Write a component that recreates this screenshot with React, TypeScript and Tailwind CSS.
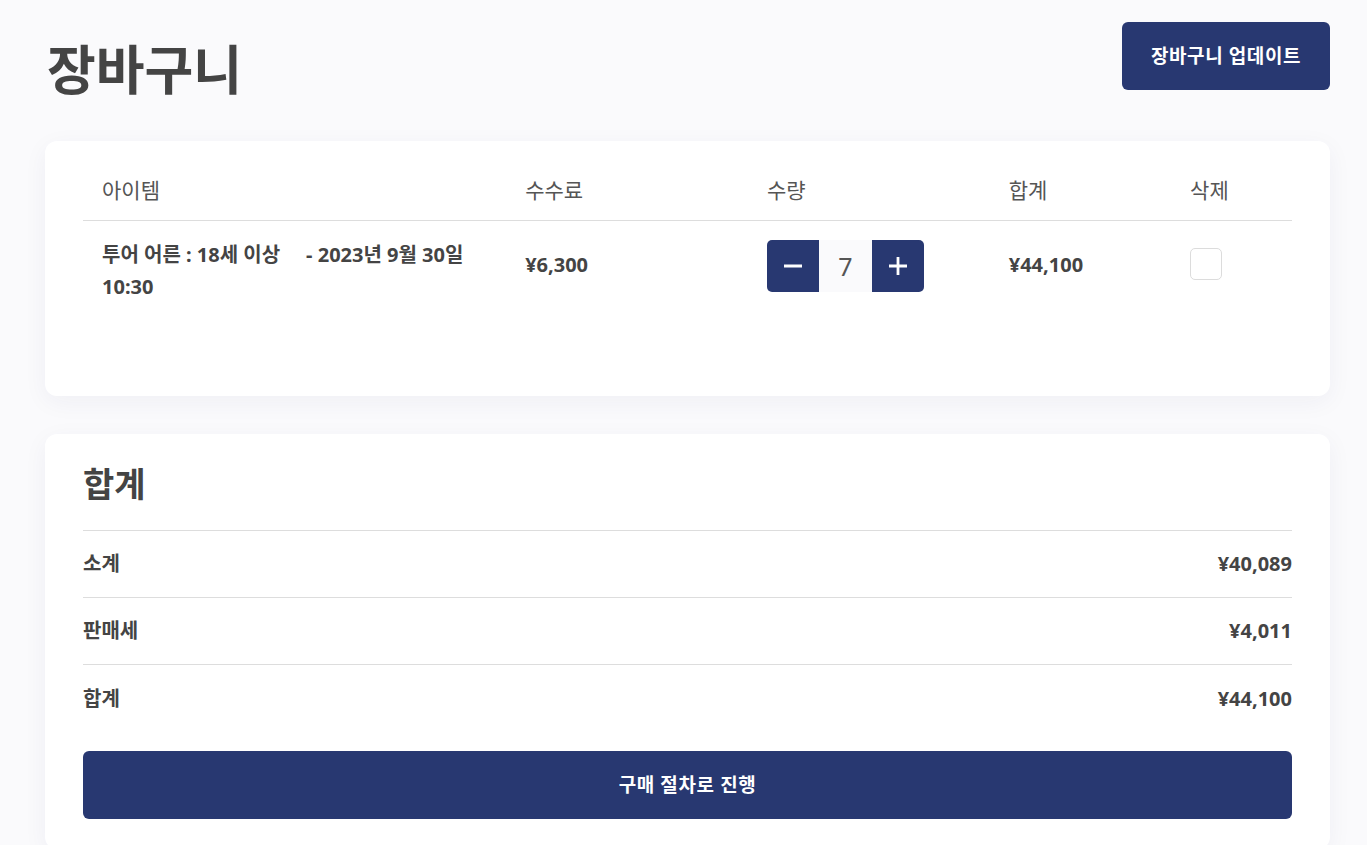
import React, { useState } from 'react';

const font = { fontFamily: '"Noto Sans", "Noto Sans CJK KR", sans-serif' };

export default function App() {
  const [qty, setQty] = useState(7);
  const [remove, setRemove] = useState(false);

  return (
    <div className="min-h-screen bg-[#fafafc] text-[#444]" style={font}>
      <div className="pl-[45px] pr-[37px] pt-[22px]">
        {/* Header */}
        <div className="flex items-start justify-between">
          <h1 className="mt-[12px] pl-[2px] text-[53px] font-bold leading-[72px] text-[#444]">장바구니</h1>
          <button className="h-[68px] w-[208px] rounded-md bg-[#283871] text-[19px] font-bold tracking-[0.6px] text-white">
            장바구니 업데이트
          </button>
        </div>

        {/* Cart table */}
        <div className="mt-[35px] rounded-xl bg-white px-[38px] pt-[34px] pb-[93px] shadow-[0_6px_24px_rgba(30,40,90,0.05)]">
          <table className="w-full table-fixed border-collapse">
            <colgroup>
              <col className="w-[35%]" />
              <col className="w-[20%]" />
              <col className="w-[20%]" />
              <col className="w-[15%]" />
              <col className="w-[10%]" />
            </colgroup>
            <thead>
              <tr className="border-b border-[#ddd] text-left text-[21px] leading-[30px] text-[#555]">
                <th className="px-[19px] pb-[15px] font-normal">아이템</th>
                <th className="px-[19px] pb-[15px] font-normal">수수료</th>
                <th className="px-[19px] pb-[15px] font-normal">수량</th>
                <th className="px-[19px] pb-[15px] font-normal">합계</th>
                <th className="px-[19px] pb-[15px] font-normal">삭제</th>
              </tr>
            </thead>
            <tbody>
              <tr className="align-top text-[20px] font-bold leading-[32px]">
                <td className="px-[19px] pt-[18px]">
                  투어 어른 : 18세 이상&nbsp;&nbsp;&nbsp;&nbsp; - 2023년 9월 30일 10:30
                </td>
                <td className="px-[19px] pt-[28px]">¥6,300</td>
                <td className="pt-[19px] pl-[19px]">
                  <div className="flex h-[52px] w-[157px] overflow-hidden rounded-[5px]">
                    <button
                      className="flex w-[52px] items-center justify-center bg-[#283871] text-white"
                      onClick={() => setQty(Math.max(1, qty - 1))}
                    >
                      <svg width="20" height="20" viewBox="0 0 20 20">
                        <path d="M1 10h18" stroke="white" strokeWidth="2.8" />
                      </svg>
                    </button>
                    <div className="flex w-[53px] items-center justify-center bg-[#fafafc] text-[25px] font-normal text-[#555]">
                      {qty}
                    </div>
                    <button
                      className="flex w-[52px] items-center justify-center bg-[#283871] text-white"
                      onClick={() => setQty(qty + 1)}
                    >
                      <svg width="20" height="20" viewBox="0 0 20 20">
                        <path d="M1 10h18M10 1v18" stroke="white" strokeWidth="2.8" />
                      </svg>
                    </button>
                  </div>
                </td>
                <td className="px-[19px] pt-[28px]">¥44,100</td>
                <td className="px-[19px] pt-[27px]">
                  <button
                    className="block h-[32px] w-[32px] rounded-[5px] border border-[#dcdcdc] bg-white"
                    onClick={() => setRemove(!remove)}
                  >
                    {remove && <span className="text-sm text-[#283871]">✓</span>}
                  </button>
                </td>
              </tr>
            </tbody>
          </table>
        </div>

        {/* Totals */}
        <div className="mt-[38px] rounded-xl bg-white px-[38px] pt-[28px] pb-[30px] shadow-[0_6px_24px_rgba(30,40,90,0.05)]">
          <h2 className="text-[34px] font-bold leading-[44px] text-[#444]">합계</h2>
          <div className="mt-[24px] border-t border-[#ddd]">
            {[
              ['소계', '¥40,089'],
              ['판매세', '¥4,011'],
              ['합계', '¥44,100'],
            ].map(([label, value], i) => (
              <div
                key={label}
                className={`flex h-[67px] items-center justify-between text-[20px] font-bold ${
                  i < 2 ? 'border-b border-[#ddd]' : ''
                }`}
              >
                <span>{label}</span>
                <span>{value}</span>
              </div>
            ))}
          </div>
          <button className="mt-[19px] h-[68px] w-full rounded-md bg-[#283871] text-[19px] font-bold tracking-[0.6px] text-white">
            구매 절차로 진행
          </button>
        </div>
      </div>
    </div>
  );
}
